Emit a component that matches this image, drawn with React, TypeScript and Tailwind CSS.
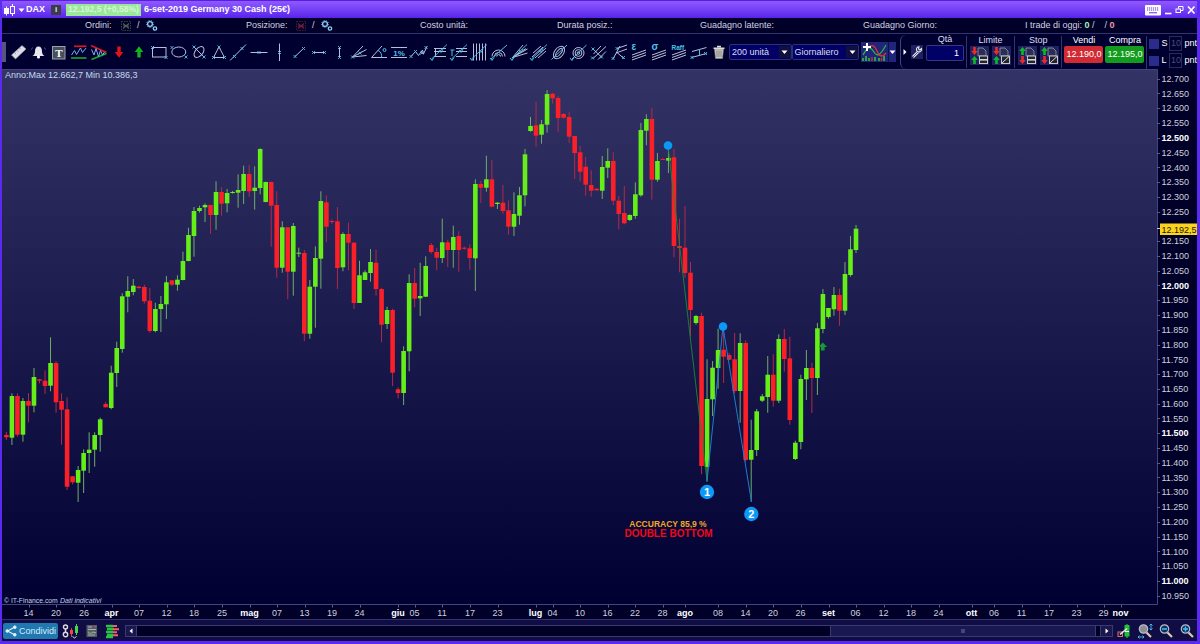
import React from 'react';

const LIGHT = '#b9bdd6';
const CYAN = '#4cc3e6';

// [high, bodyTop, bodyBottom, low, rising] in plot pixels
type Candle = [number, number, number, number, number];

const CANDLES: Candle[] = [
  [432, 435, 437.3, 440, 0], [393.3, 396, 437.7, 445, 1], [393.3, 396, 434.7, 436.7, 0], [398, 401, 434.7, 441.7, 1],
  [393, 401, 405.7, 422.3, 0], [368, 377, 405.7, 412.3, 1], [379, 379.3, 380.7, 383.3, 0], [370.3, 380.7, 386, 394, 0],
  [337.3, 363, 385.7, 391.3, 1], [361, 363, 402.3, 412.7, 0], [393.3, 401, 409.7, 444.7, 0], [397.3, 409.3, 486.7, 490, 0],
  [476, 476.3, 482.3, 484.3, 0], [466, 470, 482.7, 502, 1], [449.3, 453, 470.7, 493, 1], [432.3, 449.7, 453, 473, 1],
  [432.3, 435, 449.7, 466.7, 1], [417.7, 419.3, 435, 451.7, 1], [401.7, 404, 407.3, 407.3, 0], [365.7, 372.7, 408, 409.3, 1],
  [341.7, 348, 373, 387, 1], [293.3, 296.3, 349, 352.7, 1], [276.3, 291, 296.7, 312.3, 1], [279, 285.7, 292, 295.3, 1],
  [286, 286.7, 288, 288.7, 0], [284.7, 287, 301.3, 303.7, 0], [288, 300.7, 331, 332.7, 0], [302.7, 309, 331, 332.3, 1],
  [296, 304, 309, 332, 1], [276, 282.3, 304.3, 319, 1], [280, 280.3, 284.7, 286, 0], [275.3, 279.7, 284.7, 290.7, 1],
  [251.7, 261, 280, 280.3, 1], [227.7, 235, 261, 261.3, 1], [207, 211, 236, 256.7, 1], [205.7, 208, 211, 212.7, 1],
  [203.3, 205, 207.3, 222, 1], [204.7, 205, 215, 233.7, 0], [181.3, 192, 215, 229.7, 1], [187, 192, 203.7, 215.7, 0],
  [189, 193, 203.3, 212.3, 1], [191, 192, 192.7, 193.7, 1], [174.3, 190, 192.7, 207.7, 1], [165.7, 174, 191, 204, 1],
  [165, 174, 191.3, 197, 0], [166.3, 187.7, 191, 209.7, 1], [148.3, 149, 188, 194.3, 1], [181.7, 182, 202, 202.3, 1],
  [181.7, 182, 205.7, 246.7, 0], [191.3, 205, 267.7, 277.7, 0], [221.3, 227.3, 267.7, 272.7, 1], [227, 227.3, 271.7, 299.3, 0],
  [223, 226, 271.7, 295.7, 1], [247.7, 252.7, 253.3, 257, 1], [250, 253, 333.7, 341, 0], [280, 286.7, 333.7, 338.7, 1],
  [246.3, 258, 286.7, 327.7, 1], [191.3, 201, 258.7, 288.7, 1], [195.3, 202.3, 226.7, 242.3, 0], [219.3, 221, 222, 224, 0],
  [207, 221.3, 268, 289, 0], [232.3, 234, 267.3, 271.3, 1], [222.7, 234, 242.7, 270.3, 0], [242.3, 242.7, 303, 309, 0],
  [260.7, 275.3, 303, 303, 1], [270.3, 272.3, 280, 280, 1], [249, 262, 273, 281.7, 1], [249.7, 262.7, 289, 295.7, 0],
  [287.7, 289, 324.7, 342.3, 0], [306.7, 310, 324, 329, 1], [308.7, 310, 372.7, 386, 0], [387.3, 389.3, 393, 398.3, 0],
  [346.3, 351, 393, 405, 1], [274.3, 283, 351.3, 371.3, 1], [268, 283, 298.7, 307.3, 0], [262.7, 296, 298.3, 316, 1],
  [256.3, 266, 296.7, 297, 1], [243, 245, 252, 253.7, 0], [248, 252, 257.7, 270.3, 0], [218.7, 242.3, 258, 263, 1],
  [239.7, 242.3, 250, 267, 0], [225.7, 237, 250, 267.7, 1], [231.3, 236, 250, 271.7, 0], [246.7, 247.7, 248.7, 249.7, 0],
  [244.3, 248.3, 258, 269.7, 0], [179.3, 184, 258.3, 291, 1], [180.7, 184, 187.7, 203, 0], [155.7, 179.3, 187.7, 191.7, 1],
  [160, 179.3, 206.7, 207.3, 0], [202, 202.7, 204, 209, 1], [185, 202.7, 211, 213.7, 0], [200.3, 210.3, 226.7, 234.7, 0],
  [192.3, 214, 226.7, 236, 1], [187, 195.3, 215.7, 224.7, 1], [149, 154.3, 195.3, 206.3, 1], [117, 126, 131, 131.7, 1],
  [102, 125.3, 135.7, 146.7, 0], [120, 124.3, 134.7, 143.7, 1], [90, 94, 124.7, 132.7, 1], [92.7, 93.7, 98.3, 103.7, 0],
  [96, 98, 118, 132.3, 0], [113.3, 114, 117.7, 118.7, 0], [111.7, 117, 136.7, 143, 0], [136, 136, 153, 179, 0],
  [146, 152.3, 171.7, 181.7, 0], [157, 166.7, 184.7, 195.7, 0], [170.3, 185, 190.7, 196.7, 0], [188.3, 188.7, 190.3, 190.7, 0],
  [156, 167, 190.7, 199, 1], [148.3, 161, 167.7, 178, 1], [152.3, 161, 200.7, 205, 0], [196, 200.7, 214, 229.3, 0],
  [186, 213, 223.3, 224.3, 0], [214.3, 215, 220, 221, 1], [182.3, 194.3, 216, 218.7, 1], [123, 130, 195.3, 196.7, 1],
  [114.3, 119, 130.7, 145.3, 1], [107.7, 119, 179.7, 199.7, 0], [153, 161, 179.7, 181.7, 1], [158, 159, 160, 160, 0],
  [146.7, 158, 160.7, 173, 1], [149, 157.3, 246, 257.3, 0], [218.7, 246, 248, 272.3, 0], [206, 247.7, 273, 277.7, 0],
  [262, 272.7, 310, 336.7, 0], [315, 316, 323, 324.7, 1], [312.7, 316, 466, 474.3, 0], [359.3, 399, 467, 481.7, 1],
  [361, 367.7, 399.3, 416, 1], [328.7, 350, 368, 388.7, 1], [330, 349.7, 356.7, 383, 0], [352.7, 355, 359.7, 360.3, 0],
  [333, 359.3, 391, 393.3, 0], [333.3, 343, 391, 422.7, 1], [340.3, 343, 460, 461.7, 0], [419.7, 450, 459.7, 501.7, 1],
  [409, 411.3, 450, 456, 1], [394, 396.3, 400.7, 402, 1], [356, 374.7, 397, 412.7, 1], [354.3, 374.7, 400.7, 406.7, 0],
  [334.3, 339, 400.7, 403, 1], [329, 339, 359, 371.7, 0], [336.7, 358.3, 420, 424.7, 0], [440.7, 442.7, 459, 460, 1],
  [374.7, 379, 442, 449.3, 1], [350, 368, 379.3, 400, 1], [362.7, 368, 378, 413, 0], [323, 328.3, 378, 395, 1],
  [289, 294, 329, 333.3, 1], [308, 308, 317, 318.7, 1], [287, 295, 309.3, 315.7, 1], [288.7, 295, 310.7, 325.7, 0],
  [262, 274, 310.7, 315, 1], [236, 249.3, 275, 276.7, 1], [225, 228.7, 250, 253, 1],
];

const DATES: [string, number][] = [
  ['14', 28.5], ['20', 56], ['26', 84], ['apr', 111.5], ['07', 139], ['12', 166.5], ['18', 194], ['25', 222],
  ['mag', 249.5], ['07', 277], ['13', 304.5], ['19', 332], ['24', 359.5], ['giu', 398], ['05', 414.5], ['11', 442],
  ['17', 470], ['23', 497.5], ['lug', 535.5], ['04', 552.5], ['10', 580], ['16', 607.5], ['22', 635], ['28', 662.5],
  ['ago', 685], ['08', 718], ['14', 745.5], ['20', 773], ['26', 800.5], ['set', 828.5], ['06', 855.5], ['12', 883.5],
  ['18', 911], ['24', 938.5], ['ott', 971.5], ['06', 994], ['11', 1021.5], ['17', 1049], ['23', 1076.5], ['29', 1103.5],
  ['nov', 1120.5],
];

const PRICES = Array.from({ length: 36 }, (_, i) => 12700 - i * 50);

const formatPrice = (p: number) => `${Math.floor(p / 1000)}.${String(p % 1000).padStart(3, '0')}`;

// Small cyan cross used as a drag handle on the drawing tools
const Handle = ({ x, y }: { x: number; y: number }) => (
  <path d={`M${x - 1.5} ${y - 1.5}l3 3M${x + 1.5} ${y - 1.5}l-3 3`} stroke={CYAN} strokeWidth=".9" />
);

const Slash = () => (
  <>
    <path d="M2.5 17L18 2.5" stroke={CYAN} strokeWidth=".9" />
    <path d="M1 16l2 2.5 2-3" stroke={CYAN} strokeWidth="1" />
    <path d="M10 8l2 2.5 2-3.5" stroke={CYAN} strokeWidth=".9" />
  </>
);

const Channel = ({ label, size }: { label: string; size: number }) => (
  <>
    <path d="M3 13l14-5M3 15.5l14-5M3 18l14-5" />
    <text x="2.5" y="8" fontSize={size} fontWeight="bold" fill={CYAN} stroke="none">{label}</text>
  </>
);

const TOOLS: React.ReactNode[] = [
  // ruler
  <>
    <path d="M2.5 13L13 3.5l4 3.5L6.5 17z" fill="#dcdce4" stroke="#9a9ab0" strokeWidth=".6" />
    <path d="M5.5 10.5l1.3 1.4M8 8.3l1.3 1.4M10.5 6l1.3 1.4" stroke="#666" strokeWidth=".6" />
  </>,
  // alert bell
  <>
    <path d="M9.5 4.5c-2.500 0-3.500 2-3.500 5 0 2-1 3.500-2.500 4.500h12c-1.500-1-2.500-2.500-2.500-4.500 0-3-1-5-3.500-5z" fill="#e6e6ee" stroke="none" />
    <circle cx="9.5" cy="15" r="1.6" fill="#fff" stroke="none" />
    <path d="M3.5 5.5l-1 2M15.5 5.5l1 2" strokeWidth=".7" stroke="#777b9a" />
  </>,
  // text
  <>
    <rect x="3.5" y="4.5" width="12.5" height="12.5" fill="#46505c" stroke="#9aa2a8" />
    <text x="9.8" y="14.5" fontSize="11" fontWeight="bold" textAnchor="middle" fill="#fff" stroke="none" fontFamily="Liberation Serif">T</text>
  </>,
  <>
    <path d="M5 4.3h12.5" stroke="#e0141e" strokeWidth="1.7" />
    <path d="M2 16h15.5" stroke="#14b428" strokeWidth="1.5" />
    <path d="M2.5 13l3-4.5 2 4 4-6.5 2 4.5 3.5-4.5" stroke="#6fb4e8" />
  </>,
  <>
    <path d="M2 3.5l15.500 7" stroke="#e0141e" strokeWidth="1.7" />
    <path d="M2.5 17.5L17.5 11.5" stroke="#14b428" strokeWidth="1.5" />
    <path d="M2.5 7.500l2.500 5.500 2-6.500 2.500 8 2-6 2 4.500 2-3" stroke="#7fb0e8" />
  </>,
  <path d="M8.3 4.5h3.4v5.5h2.6L10 15.8 5.7 10h2.6z" fill="#e01414" stroke="none" />,
  <path d="M8.3 15.5h3.4v-5.500h2.6L10 4.2 5.7 10h2.6z" fill="#12b41c" stroke="none" />,
  <><rect x="3.5" y="5.5" width="13.5" height="9.5" /><Handle x={3.5} y={5.5} /><Handle x={17} y={15.5} /></>,
  <><ellipse cx="9.8" cy="10" rx="7" ry="5" /><Handle x={3} y={5.5} /><Handle x={17} y={15} /></>,
  <>
    <ellipse cx="10" cy="10" rx="3.8" ry="6.3" transform="rotate(40 10 10)" />
    <path d="M5 5l10 10" /><Handle x={5} y={5} /><Handle x={15} y={15} />
  </>,
  <><path d="M10 5l5.5 10.5h-11z" /><Handle x={10} y={5} /><Handle x={4.5} y={15.5} /><Handle x={15.5} y={15.5} /></>,
  <><path d="M1 18.5L17 2.5" /><Handle x={5.5} y={14.5} /><Handle x={13} y={6.5} /></>,
  <><path d="M1.5 10.5h17" /><Handle x={10} y={10.5} /></>,
  <><path d="M10.5 1.5v17.5" /><Handle x={10.5} y={10.5} /></>,
  <><path d="M6 14.5l8.5-8" /><Handle x={6} y={14.5} /><Handle x={14.5} y={6.5} /></>,
  <><path d="M4 10.5h12" /><Handle x={4.5} y={10.5} /><Handle x={15.5} y={10.5} /></>,
  <><path d="M10.500 5v11" /><Handle x={10.5} y={5.5} /><Handle x={10.5} y={15.5} /></>,
  <><path d="M3.5 15L14 4M3.5 15l14-7.500M3.5 15l14-1.500" /><Handle x={3.5} y={15} /><Handle x={11} y={11} /></>,
  <>
    <path d="M2.5 15.5h15.5M2.5 15.5L13 4" /><path d="M9 8.5c3 1 4 4 3.5 7" stroke={CYAN} />
    <circle cx="15.5" cy="8" r="1.5" stroke={CYAN} />
  </>,
  <>
    <path d="M2 5.5h16M2 15.500h16" />
    <text x="10" y="13.5" fontSize="8" fontWeight="bold" textAnchor="middle" fill={CYAN} stroke="none">1%</text>
  </>,
  <><path d="M2 14.5l4.5-5 3 4 4-5.500 1 4 3.5-7.500" /><Handle x={2} y={14.5} /><Handle x={6.5} y={9.5} /><Handle x={13} y={11} /><Handle x={17} y={5.5} /></>,
  <><path d="M5 6.500h12M5 9.500h12M5 14.500h12M6.500 6v9" /><Slash /></>,
  <><path d="M7 6.500h11M7 9.500h11M7 14.500h11" /><path d="M3 8v6M1.5 8h4" stroke={CYAN} /><Slash /></>,
  <><path d="M4.5 1.5v17M7.5 1.5v17M10.500 1.5v17M13.500 1.5v17M16.500 1.5v17" /><Slash /></>,
  <>
    <path d="M3 14.5a6.5 6.5 0 0 1 13 0M5.5 14.5a4 4 0 0 1 8 0M7.7 14.5a1.9 1.9 0 0 1 3.8 0" />
    <path d="M2 17L18 3" stroke={CYAN} /><path d="M1 16l2 2.5 2-3" stroke={CYAN} />
  </>,
  <><path d="M3.5 15.5L14 3M3.5 15.5L18.5 7M3.5 15.5L18.5 11M3.5 15.5L17 6.5" /><Slash /></>,
  <><path d="M3 15L14 5M6 16L17 6M4 11l8-7M9 16l8-7" /><Slash /></>,
  <>
    <ellipse cx="10" cy="10.5" rx="4.5" ry="7" transform="rotate(38 10 10.5)" />
    <ellipse cx="10" cy="10.5" rx="2" ry="5" transform="rotate(38 10 10.5)" />
    <path d="M2.5 17.5L18 3" stroke={CYAN} />
  </>,
  <>
    <circle cx="9.5" cy="11" r="5.500" /><circle cx="9.5" cy="11" r="3.4" /><circle cx="9.5" cy="11" r="1.3" />
    <path d="M2.5 17.5L17.5 3" stroke={CYAN} /><path d="M1 16l2 2.5 2-3" stroke={CYAN} />
  </>,
  <><path d="M4.5 12L12 4M4 16.5L17 4.5M9 17.5l8-8M4 7l9 8.5" /><Handle x={4} y={7} /><Handle x={3.5} y={16} /><Handle x={12.5} y={15} /></>,
  <><path d="M4 17L11 4M8 6.500l10-3.500M7 11l11-4M8 10.500l7 6" /><Handle x={4} y={16.5} /><Handle x={8} y={6.5} /><Handle x={14.5} y={15.5} /></>,
  <Channel label="ε" size={10} />,
  <Channel label="σ" size={10} />,
  <Channel label="Raff" size={6.5} />,
  <>
    <path d="M2.5 15.5l15-4M3 9.5l14.5-4" /><path d="M10.500 7.5v6" stroke={CYAN} />
    <Handle x={3} y={15.5} /><Handle x={16.5} y={11.5} />
  </>,
  // trash
  <>
    <path d="M5.5 7h9l-1 9.5h-7z" fill="#c9c9c4" stroke="#8b8b88" strokeWidth=".6" />
    <path d="M4.500 6.200h11M8 4.500h4" stroke="#dadad6" strokeWidth="1.4" />
    <path d="M8 8.500v6.500M10 8.500v6.500M12 8.500v6.500" stroke="#666" strokeWidth=".7" />
  </>,
];

const Gears = () => (
  <svg className="h-3 w-3" viewBox="0 0 12 12" fill="none" stroke="#8ccdf5">
    <circle cx="4" cy="4" r="2.4" strokeWidth="1.3" />
    <circle cx="4" cy="4" r="3.5" strokeWidth=".8" strokeDasharray="1.2 1.2" />
    <circle cx="9" cy="8.5" r="1.7" strokeWidth="1.3" />
  </svg>
);

const CancelAll = ({ tone }: { tone: string }) => (
  <svg className="h-2.5 w-2.5" viewBox="0 0 10 10" fill="none" stroke={tone}>
    <rect x=".5" y=".5" width="9" height="9" strokeDasharray="1.5 1" opacity=".7" />
    <path d="M2 2.5l6 5M8 2.5l-6 5M2 5h6" strokeWidth="1.2" />
  </svg>
);

const Caret = () => (
  <svg className="h-1.5 w-[7px]" viewBox="0 0 7 6"><path d="M.5 1.5h6L3.500 5z" fill="#fff" /></svg>
);

const Select = ({ label, className }: { label: string; className: string }) => (
  <div className={`flex h-4 items-center rounded-xs border border-[#2f2f78] bg-[#000066] pl-0.5 text-[#dcdcf0] ${className}`}>
    <span className="flex-1">{label}</span>
    <span className="flex h-3 w-3 items-center justify-center bg-[#101040]"><Caret /></span>
  </div>
);

const DOWN = 'M3.2 1h2.6v4h2l-3.3 4-3.3-4h2z';
const UP = 'M3.2 9h2.6V5h2L4.5 1 1.2 5h2z';

// Order ticket icon: two arrows over a sheet of paper
const OrderIcon = ({ sell, slash }: { sell?: boolean; slash?: boolean }) => (
  <svg className="h-[19px] w-[19px] bg-[#1e2260]" viewBox="0 0 19 19">
    <path d="M8 2h5l3 3v5H8z" fill="#2a2d55" stroke="#9a9aaa" strokeWidth=".8" />
    <path d={sell ? UP : DOWN} fill={sell ? '#10b828' : '#f02828'} />
    <path d={sell ? DOWN : UP} fill={sell ? '#f02828' : '#10b828'} transform="translate(0 9)" />
    <rect x="9.5" y="10" width="8" height="7.5" fill="#22242e" stroke="#c8c8cc" strokeWidth="1" />
    {slash ? <path d="M10 17l7-6.5" stroke="#ddd" /> : <path d="M10 13.8h7.5" stroke="#eee" strokeWidth="1.4" />}
  </svg>
);

function TitleBar() {
  return (
    <header className="flex h-[18px] items-center bg-linear-to-b from-[#9058ff] to-[#5a20ea] pl-0.5 font-bold text-white border-t border-[#5a1ee0]">
      <svg className="h-3 w-3" viewBox="0 0 12 12" fill="none" stroke="#fff">
        <path d="M2.5 2.5v9M8.5 0v12" />
        <rect x=".5" y="4.5" width="4" height="5" fill="#fff" />
        <rect x="6.5" y="2.5" width="4" height="7" fill="#7a44f8" />
      </svg>
      <span className="ml-0.5"><Caret /></span>
      <span className="ml-px w-[25px]">DAX</span>
      <span className="flex h-2.5 w-2.5 items-center justify-center bg-[#3c3c46] text-[8px] text-[#e8e8e8]">i</span>
      <span className="ml-[5px] flex h-3 w-[75px] items-center overflow-hidden bg-[#9be89b] pl-0.5 text-[8.6px] text-[#d4fad4]">12.192,5 (+0,58%)</span>
      <span className="ml-[3px]">6-set-2019 Germany 30 Cash (25€)</span>
      <svg className="ml-auto h-3 w-[52px]" viewBox="0 0 52 12" fill="none" stroke="#fff">
        <rect x="0" y="1" width="16" height="10.5" rx="1" fill="#fff" stroke="none" />
        <path d="M2 4h12M2 6h12" stroke="#5b2be0" strokeDasharray="1.2 .8" />
        <path d="M4 8.8h8" stroke="#5b2be0" />
        <path d="M20 9.5h6.5" strokeWidth="1.6" />
        <path d="M33.5 4.5v-2h4.5v4h-2" /><rect x="31" y="5" width="4.5" height="3.5" />
        <path d="M43 2.5l6.500 7M49.500 2.500l-6.500 7" strokeWidth="1.7" />
      </svg>
    </header>
  );
}

function StatusRow() {
  return (
    <div className="flex h-[16px] items-center border-b border-[#33336b] bg-[#000028] text-[#d2d2e0]">
      <div className="flex w-[161px] items-center pl-[83px]">
        <span className="w-9">Ordini:</span><CancelAll tone="#4d5a4d" /><span className="mx-1.5">/</span><Gears />
      </div>
      <div className="flex w-[257px] items-center pl-[83px]">
        <span className="w-[50px]">Posizione:</span><CancelAll tone="#6b2038" /><span className="mx-1.5">/</span><Gears />
      </div>
      <span className="w-[137px]">Costo unità:</span>
      <span className="w-[143px]">Durata posiz.:</span>
      <span className="w-[163px]">Guadagno latente:</span>
      <span className="w-[162px]">Guadagno Giorno:</span>
      <span>I trade di oggi: <b className="text-[#a8f0b0]">0</b> /</span>
      <span className="ml-2.5">/ <b className="text-[#f09aa8]">0</b></span>
    </div>
  );
}

function Toolbar() {
  return (
    <div className="flex h-[34px] items-center bg-[#000030] text-[#dcdcf0]">
      <div className="h-5 w-1 bg-[#55557e]" />
      <div className="ml-[3px] flex">
        {TOOLS.map((tool, i) => (
          <svg key={i} className="h-5 w-5" viewBox="0 0 20 20" fill="none" stroke={LIGHT} strokeWidth="1">{tool}</svg>
        ))}
      </div>
      <Select label="200 unità" className="w-[63px]" />
      <Select label="Giornaliero" className="w-[68px]" />
      <div className="ml-0.5 flex h-5 items-center bg-[#20247a]">
        <svg className="h-5 w-[27px]" viewBox="0 0 27 20" fill="none">
          <path d="M2 16v3M5 14v5M8 16v3M14 15v4M18 16v3M23 14v5" stroke="#25a53a" strokeWidth="2" />
          <path d="M11 15v4M20.5 16v3" stroke="#d02828" strokeWidth="1.5" />
          <path d="M2 13c5-9 7-9 11-3s7 2 12-7" stroke="#24b93c" strokeWidth="1.3" />
          <path d="M8 5c5-4 7 2 9 6s5 4 8 0" stroke="#e43030" strokeWidth="1.3" />
          <path d="M6 1v8M2 5h8" stroke="#fff" strokeWidth="2" />
        </svg>
        <span className="flex h-5 w-2 items-center justify-center border-l border-[#10104a]"><Caret /></span>
      </div>
      <div className="ml-1 flex h-full items-center rounded-l-md border-l border-[#44447c]">
        <svg className="ml-0.5 h-2 w-1" viewBox="0 0 4 8"><path d="M.5 1l3 3-3 3z" fill="#fff" /></svg>
        <svg className="ml-1 h-3.5 w-3 bg-[#202060]" viewBox="0 0 12 14" fill="none" stroke="#e2e2ea">
          <path d="M2 12l5-5" strokeWidth="2.6" /><path d="M2 12l5-5" stroke="#333366" strokeWidth=".8" />
          <path d="M10.5 3.5a2.6 2.6 0 1 1-2.500-1.800l-.5 2.300 1.300 1z" strokeWidth="1.1" />
        </svg>
        <div className="ml-[3px] flex h-full w-[38px] flex-col items-center">
          <span className="leading-[9px]">Qtà</span>
          <span className="mt-px flex h-4 w-full items-center justify-end rounded-xs border border-[#36367c] bg-[#000066] pr-1 text-white">1</span>
        </div>
      </div>
      <div className="ml-0.5 flex h-8 w-12 flex-col items-center border-l border-[#333366]">
        <span className="leading-[9px]">Limite</span>
        <div className="mt-px flex gap-[3px]"><OrderIcon /><OrderIcon slash /></div>
      </div>
      <div className="flex h-8 w-12 flex-col items-center border-l border-[#333366]">
        <span className="leading-[9px]">Stop</span>
        <div className="mt-px flex gap-[3px]"><OrderIcon sell /><OrderIcon sell slash /></div>
      </div>
      <div className="flex h-8 gap-[2px] border-l border-[#333366] pl-0.5 text-white">
        <div className="flex w-[39px] flex-col items-center">
          <span className="leading-[9px]">Vendi</span>
          <span className="mt-px flex h-[17px] w-full items-center justify-center rounded-xs bg-[#d02a34]">12.190,0</span>
        </div>
        <div className="flex w-[39px] flex-col items-center">
          <span className="leading-[9px]">Compra</span>
          <span className="mt-px flex h-[17px] w-full items-center justify-center rounded-xs bg-[#129c1e]">12.195,0</span>
        </div>
      </div>
      <div className="ml-0.5 flex h-[33px] flex-col justify-between border-l border-[#333366] pl-0.5">
        {['S', 'L'].map((side) => (
          <div key={side} className="flex h-4 items-center text-white">
            <span className="h-2.5 w-2.5 bg-[#2b2b8c]" />
            <span className="ml-0.5 w-2">{side}</span>
            <span className="flex h-[15px] w-[13px] items-center justify-center border border-[#2a2a5c] text-[#4a4a74]">10</span>
            <span className="ml-0.5">pnt</span>
          </div>
        ))}
      </div>
    </div>
  );
}

function Chart() {
  return (
    <svg className="block h-[551px] w-[1195px]" viewBox="2 69 1195 551">
      <defs>
        <linearGradient id="plot" x1="0" y1="0" x2="0" y2="1">
          <stop offset="0" stopColor="#333366" />
          <stop offset="1" stopColor="#000033" />
        </linearGradient>
      </defs>
      <rect x="2" y="69" width="1195" height="551" fill="#000028" />
      <rect x="2" y="69" width="1155" height="535" fill="url(#plot)" />
      <path d="M2 69.5h1155.5V604.5H2" fill="none" stroke="#44447c" />
      <text x="5" y="77.5" fill="#c3dcec">Anno:Max 12.662,7 Min 10.386,3</text>

      {CANDLES.map(([high, top, bottom, low, up], i) => {
        const x = 6.4 + i * 5.517;
        const height = Math.max(bottom - top, 1);
        return (
          <g key={i}>
            <path d={`M${x} ${high}V${low}`} stroke={up ? '#6fae66' : '#b02a4a'} />
            <rect x={x - 2.3} y={top} width="4.6" height={height} fill={up ? '#66ee18' : '#fb2028'} />
          </g>
        );
      })}

      {/* double bottom pattern */}
      <path d="M668 146L707 481" stroke="#1d8a32" strokeWidth=".9" />
      <path d="M707 481L723 327L751.5 502" fill="none" stroke="#1c7ed0" strokeWidth="1" />
      <circle cx="668" cy="145.5" r="4.3" fill="#0c98f8" />
      <circle cx="723" cy="326.5" r="4.3" fill="#0c98f8" />
      <g fontSize="11" fontWeight="bold" textAnchor="middle" fill="#fff">
        <circle cx="707" cy="492" r="7.2" fill="#0c98f8" />
        <text x="707" y="496">1</text>
        <circle cx="751.3" cy="514" r="7.2" fill="#0c98f8" />
        <text x="751.3" y="518">2</text>
      </g>
      <path d="M821 350.5v-3.500h-2.500l4.300-4.500 4.300 4.500h-2.500v3.500z" fill="#169a34" />
      <text x="668" y="526.5" fontSize="8.5" fontWeight="bold" textAnchor="middle" fill="#f5a623">ACCURACY 85,9 %</text>
      <text x="668.5" y="537" fontSize="10" fontWeight="bold" textAnchor="middle" fill="#ee0a18">DOUBLE BOTTOM</text>
      <text x="4" y="602.5" fontSize="6.8" fill="#c4d4e4">© IT-Finance.com</text>
      <text x="60" y="602.5" fontSize="7" fontStyle="italic" fill="#c4d4e4">Dati indicativi</text>

      {/* price axis, the last price tag takes the place of 12.200 */}
      {PRICES.map((price, i) => {
        if (price === 12200) return null;
        const y = 78.7 + i * 14.77;
        const major = price % 500 === 0;
        return (
          <g key={price}>
            <path d={`M1157 ${Math.round(y) + 0.5}h3`} stroke="#5a5a90" />
            <text x="1161.5" y={y + 3.2} fill={major ? '#fff' : '#d0d0dc'} fontWeight={major ? 'bold' : 'normal'}>{formatPrice(price)}</text>
          </g>
        );
      })}
      <path d="M1157 228.5h3" stroke="#c8c8e0" />
      <rect x="1160" y="223.5" width="37" height="11.500" fill="#fad41e" />
      <text x="1161.500" y="232.7" fill="#1a1400">12.192,5</text>

      {/* date axis */}
      {DATES.map(([label, x], i) => {
        const month = /[a-z]/.test(label);
        return (
          <g key={i}>
            <path d={`M${Math.round(x) + 0.5} 605v2.5`} stroke="#5a5a90" />
            <text x={x} y="616" textAnchor="middle" fill={month ? '#fff' : '#d0d0dc'} fontWeight={month ? 'bold' : 'normal'}>{label}</text>
          </g>
        );
      })}
      <path d="M2 619.5h1195" stroke="#33336b" />
    </svg>
  );
}

const Lens = ({ sign, children }: { sign?: string; children?: React.ReactNode }) => (
  <svg className="h-4 w-4" viewBox="0 0 16 16" fill="none">
    <path d="M9.5 9.5l4.5 4.5" stroke="#d8c8b8" strokeWidth="2.2" />
    <circle cx="6.5" cy="6" r="4.2" fill={sign ? '#10305c' : '#8c8c94'} stroke="#b8bcc8" strokeWidth="1.2" />
    {sign && <path d={sign} stroke="#3ac0ff" strokeWidth="1.5" />}
    {children}
  </svg>
);

function BottomBar() {
  return (
    <footer className="flex h-[21px] items-center bg-[#100c44] pl-px pt-px">
      <button className="flex h-4 w-[55px] items-center rounded-xs bg-[#1f78b0] pl-0.5 text-[#d8ecf8]">
        <svg className="mr-0.5 h-3 w-3" viewBox="0 0 12 12" fill="#e4f2fc" stroke="#e4f2fc">
          <path d="M10 2L2.5 6l7.5 4" fill="none" strokeWidth="1.1" />
          <circle cx="9.8" cy="2.2" r="1.3" /><circle cx="2.3" cy="6" r="1.3" /><circle cx="9.8" cy="9.8" r="1.3" />
        </svg>
        Condividi
      </button>
      <svg className="ml-1 h-4 w-[17px]" viewBox="0 0 17 16" fill="none">
        <circle cx="3.5" cy="4" r="2" stroke="#ddd" strokeWidth="1.4" /><circle cx="3.5" cy="11.5" r="2.2" stroke="#ddd" strokeWidth="1.4" />
        <path d="M3.5 5.5v4" stroke="#ddd" strokeWidth="1.4" />
        <path d="M9.5 5v9" stroke="#e04040" /><rect x="8" y="7" width="3" height="4" fill="#f04848" />
        <path d="M14.5 1v11" stroke="#50d050" /><rect x="13" y="3" width="3" height="7" fill="#46d84a" />
        <path d="M10.5 13.5l2 1.5 2-1.5" stroke="#ddd" />
      </svg>
      <svg className="ml-[7px] h-3.5 w-3" viewBox="0 0 12 14" fill="none">
        <rect x=".5" y="1" width="10.5" height="12" fill="#555b68" />
        <path d="M2 3h4M2 5.5h8M2 8l3 1 2-1 3 1M2 11h7" stroke="#a8b0b8" /><path d="M8 2l2 1M3 8.5h3" stroke="#e04848" />
        <path d="M2 10l3-1 3 2" stroke="#40b050" />
      </svg>
      <svg className="ml-2 h-4 w-3.5" viewBox="0 0 14 16" fill="none">
        <path d="M0 3h7M1 6h7M0 9h7M1 12h6M0 14h7" stroke="#2cc044" strokeWidth="2.4" />
        <path d="M7 3h4M7 6.2h6M7 9.2h4M7 12.2h5" stroke="#f06464" strokeWidth="2" />
      </svg>
      <div className="ml-[5px] flex h-3 w-[988px] border border-[#3a3a70] bg-[#000026]">
        <span className="flex w-[11px] items-center justify-center border-r border-[#3a3a70] bg-[#19174e]">
          <svg className="h-1.5 w-1" viewBox="0 0 4 6"><path d="M3.5.5L.5 3l3 2.5z" fill="#fff" /></svg>
        </span>
        <span className="flex-1" />
        <span className="flex w-[266px] items-center justify-center border-x border-[#3a3a70] bg-[#1a1850]">
          <span className="h-1 w-1 bg-[#45457c]" />
        </span>
        <span className="w-1" />
        <span className="flex w-3 items-center justify-center border-l border-[#3a3a70] bg-[#19174e]">
          <svg className="h-1.5 w-1" viewBox="0 0 4 6"><path d="M.5.5l3 2.5-3 2.5z" fill="#fff" /></svg>
        </span>
      </div>
      <svg className="ml-1 h-4 w-3.5" viewBox="0 0 14 16" fill="none">
        <path d="M10 1v14" stroke="#3bd04a" /><rect x="7.5" y="2" width="5" height="11.5" fill="#22c038" />
        <rect x="1" y="9" width="4.5" height="4.5" stroke="#e07070" /><path d="M3 11.5l7-6" stroke="#e8e8e8" strokeWidth="1.6" />
        <path d="M8 8.5h4" stroke="#fff" />
      </svg>
      <div className="ml-1.5 flex gap-[5px]">
        <Lens><path d="M14 1v6M12.5 2.5L14 1l1.5 1.5M12.5 5.5L14 7l1.5-1.5M1 14h6M2.5 12.5L1 14l1.5 1.5M5.5 12.5L7 14l-1.5 1.5" stroke="#48c0f0" strokeWidth=".9" /></Lens>
        <Lens sign="M4 6h5" />
        <Lens sign="M4 6h5M6.5 3.5v5" />
      </div>
    </footer>
  );
}

function App() {
  return (
    <div className="h-[644px] w-[1200px] overflow-hidden border-x-2 border-[#5a2af0] border-r-3 bg-[#000030] font-['Liberation_Sans',sans-serif] text-[9px] leading-none whitespace-nowrap">
      <TitleBar />
      <StatusRow />
      <div className="h-px bg-[#000030]" />
      <Toolbar />
      <Chart />
      <BottomBar />
      <div className="h-[3px] bg-[#5a2af0]" />
    </div>
  );
}

export default App;
